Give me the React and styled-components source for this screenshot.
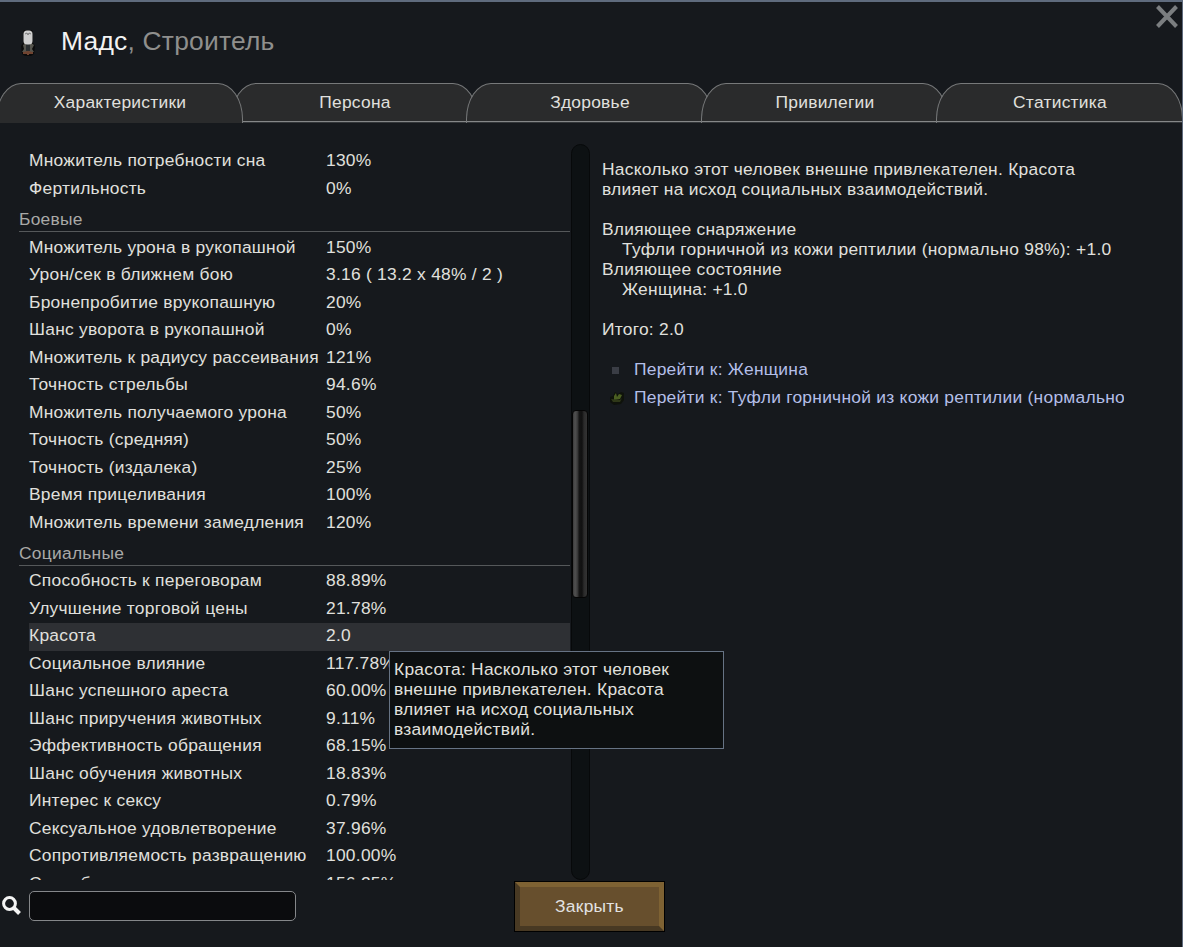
import React from 'react'
import styled, { createGlobalStyle } from 'styled-components'

const GlobalStyle = createGlobalStyle`
  * {
    box-sizing: border-box;
  }

  body {
    margin: 0;
    background: #16191d;
  }
`

const Window = styled.div`
  position: relative;
  display: flex;
  flex-direction: column;
  width: 1183px;
  height: 947px;
  overflow: hidden;
  border-top: 2px solid #5f6b7d;
  border-right: 1px solid #5f6b7d;
  background: #16191d;
  color: #e0e0de;
  font-family: 'Liberation Sans', Arial, sans-serif;
  font-size: 17.4px;
  line-height: 20px;
  letter-spacing: 0.26px;
`

const Header = styled.div`
  display: flex;
  align-items: flex-start;
  height: 81px;
  padding-left: 20px;
`

const Portrait = styled.svg`
  width: 16px;
  height: 28px;
  margin-top: 27px;
`

const Title = styled.h1`
  flex: 1;
  margin: 22px 0 0 25px;
  font-size: 26.4px;
  font-weight: normal;
  line-height: 34px;
  letter-spacing: 0.22px;
  color: #f2f2f2;

  span {
    color: #8f8f8d;
  }
`

const CloseIcon = styled.svg`
  width: 24px;
  height: 24px;
  margin: 2px 3px 0 0;
`

const Tabs = styled.div`
  display: flex;
  flex: none;
  margin-left: -4px;
`

const Tab = styled.div`
  position: relative;
  z-index: ${props => (props.$active ? 1 : 0)};
  flex: none;
  width: 247px;
  height: 40px;
  margin-right: -12px;
  padding-left: 1px;
  border: 1px solid #77797a;
  border-bottom: 0;
  border-radius: 25px 25px 0 0 / 36px 36px 0 0;
  background: #2a2b2c;
  box-shadow: ${props => (props.$active ? 'none' : 'inset 0 -1px #34373a, inset 0 -2px #858788')};
  line-height: 37px;
  text-align: center;
`

const Main = styled.div`
  display: flex;
  height: 757px;
  padding-top: 21px;
`

const StatList = styled.div`
  width: 570px;
  padding: 4px 0 0 19px;
  overflow: hidden;
`

const Group = styled.div`
  &:first-child {
    padding-bottom: 1px;
  }
`

const Section = styled.div`
  height: 28.25px;
  margin-bottom: 2.5px;
  padding-top: 5.3px;
  border-bottom: 1px solid #55585a;
  color: #a9a9a7;
`

const Row = styled.div`
  display: flex;
  height: 27.5px;
  margin-left: 10px;
  padding-top: 2px;
  background: ${props => (props.$active ? '#2e3034' : 'transparent')};
  white-space: nowrap;
`

const Label = styled.div`
  width: 297px;
`

const Scrollbar = styled.div`
  width: 19px;
  margin-left: 1px;
  padding: 265px 2px 0 0;
  border: 1px solid #07090a;
  border-radius: 10px;
  background: #0d1113;
`

const Thumb = styled.div`
  width: 16px;
  height: 188px;
  border: 1px solid #050505;
  border-radius: 4px;
  background: linear-gradient(90deg, #3a3a3a 0, #505050 2px, #4a4a4a 3px, #333 5px, #151515 6px, #111 9px, #2b2b2b 11px, #333 100%);
`

const Details = styled.div`
  flex: 1;
  padding: 15px 0 0 12px;
`

const Description = styled.div`
  white-space: pre-wrap;
`

const Indent = styled.div`
  padding-left: 20px;
`

const Links = styled.div`
  width: 522px;
  margin-top: 16px;
`

const LinkRow = styled.div`
  display: flex;
  align-items: center;
  height: 28px;
  color: #b4bfe8;
  white-space: nowrap;

  svg {
    flex: none;
    width: 20px;
    height: 20px;
    margin: 1px 7px 0 5px;
  }
`

const LinkText = styled.div`
  overflow: hidden;
`

const Footer = styled.div`
  display: flex;
  align-items: flex-start;
  padding-top: 1px;
`

const SearchIcon = styled.svg`
  width: 20px;
  height: 20px;
  margin: 15px 7px 0 2px;
`

const SearchInput = styled.input`
  width: 267px;
  height: 30px;
  margin: 10px 0 0;
  border: 1px solid #85878a;
  border-radius: 5px;
  background: #0b0c0e;
  color: #e2e2e2;
  outline: none;
`

const CloseButton = styled.button`
  width: 151px;
  height: 51px;
  margin-left: 218px;
  padding: 0;
  border: 1px solid #000;
  background: #000;
  color: #e2e2e2;
  font: inherit;
  letter-spacing: inherit;

  span {
    display: block;
    height: 49px;
    border: 5px solid;
    border-color: #7e6233 #7e6233 #483923 #483923;
    background: #674f2d;
    line-height: 39px;
  }
`

const Tooltip = styled.div`
  position: absolute;
  left: 389px;
  top: 649px;
  z-index: 2;
  width: 335px;
  height: 98px;
  padding: 7px 4px;
  border: 1px solid #667384;
  background: #0d1011;
`

const tabs = ['Характеристики', 'Персона', 'Здоровье', 'Привилегии', 'Статистика']

const groups = [
  {
    stats: [
      ['Множитель потребности сна', '130%'],
      ['Фертильность', '0%'],
    ],
  },
  {
    title: 'Боевые',
    stats: [
      ['Множитель урона в рукопашной', '150%'],
      ['Урон/сек в ближнем бою', '3.16 ( 13.2 x 48% / 2 )'],
      ['Бронепробитие врукопашную', '20%'],
      ['Шанс уворота в рукопашной', '0%'],
      ['Множитель к радиусу рассеивания', '121%'],
      ['Точность стрельбы', '94.6%'],
      ['Множитель получаемого урона', '50%'],
      ['Точность (средняя)', '50%'],
      ['Точность (издалека)', '25%'],
      ['Время прицеливания', '100%'],
      ['Множитель времени замедления', '120%'],
    ],
  },
  {
    title: 'Социальные',
    stats: [
      ['Способность к переговорам', '88.89%'],
      ['Улучшение торговой цены', '21.78%'],
      ['Красота', '2.0'],
      ['Социальное влияние', '117.78%'],
      ['Шанс успешного ареста', '60.00%'],
      ['Шанс приручения животных', '9.11%'],
      ['Эффективность обращения', '68.15%'],
      ['Шанс обучения животных', '18.83%'],
      ['Интерес к сексу', '0.79%'],
      ['Сексуальное удовлетворение', '37.96%'],
      ['Сопротивляемость развращению', '100.00%'],
      ['Способность', '156.25%'],
    ],
  },
]

const App = () => {
  return (
    <Window>
      <GlobalStyle />
      <Header>
        <Portrait viewBox="0 0 16 28">
          <path d="M4 1h8l1 3v10l2 3-1 8-3 2H5l-3-2-1-8 2-3V4z" fill="#0b0b0b" />
          <path d="M3 16l3-2h5l3 2-2 4 2 3H2l2-3z" fill="#55544d" />
          <path d="M6 15h4v7H6z" fill="#2b2f31" />
          <rect x="3.5" y="1.5" width="9" height="14" rx="3.5" fill="#cfcfcf" />
          <path d="M5 5l2-1 1 2 1-2 2 1" fill="none" stroke="#7b7b7b" />
          <path d="M3 23l5-1 5 1v2H9v1H7v-1H3z" fill="#6f4330" />
        </Portrait>
        <Title>Мадс<span>, Строитель</span></Title>
        <CloseIcon viewBox="0 0 24 24">
          <path d="M2.5 2.5l19 20M21.5 2.5l-19 20" stroke="#7b7e80" strokeWidth="4" />
        </CloseIcon>
      </Header>
      <Tabs>
        {tabs.map((name, i) => (
          <Tab key={name} $active={i === 0}>{name}</Tab>
        ))}
      </Tabs>
      <Main>
        <StatList>
          {groups.map((group, i) => (
            <Group key={i}>
              {group.title && <Section>{group.title}</Section>}
              {group.stats.map(([label, value]) => (
                <Row key={label} $active={label === 'Красота'}>
                  <Label>{label}</Label>
                  <div>{value}</div>
                </Row>
              ))}
            </Group>
          ))}
        </StatList>
        <Scrollbar>
          <Thumb />
        </Scrollbar>
        <Details>
          <Description>
            Насколько этот человек внешне привлекателен. Красота<br />
            влияет на исход социальных взаимодействий.<br />
            <br />
            Влияющее снаряжение
            <Indent>Туфли горничной из кожи рептилии (нормально 98%): +1.0</Indent>
            Влияющее состояние
            <Indent>Женщина: +1.0</Indent>
            <br />
            Итого: 2.0
          </Description>
          <Links>
            <LinkRow>
              <svg viewBox="0 0 20 20">
                <path d="M5 7h7v7H5z" fill="#3a3d45" />
              </svg>
              <LinkText>Перейти к: Женщина</LinkText>
            </LinkRow>
            <LinkRow>
              <svg viewBox="0 0 20 20">
                <path d="M3 9l3-1 2-4 3 2 3-2 3 1v7l-3 4-7 1-4-3z" fill="#0f120b" />
                <path d="M7 8l2-3 1 4 2-3 3 1-2 4-6 1z" fill="#4b5f22" />
                <path d="M4 11l9 1 2-2-2 4H6z" fill="#2f3818" />
              </svg>
              <LinkText>Перейти к: Туфли горничной из кожи рептилии (нормально 98%)</LinkText>
            </LinkRow>
          </Links>
        </Details>
      </Main>
      <Footer>
        <SearchIcon viewBox="0 0 20 20">
          <circle cx="7.5" cy="7.5" r="5.9" fill="none" stroke="#f4f4f4" strokeWidth="3" />
          <path d="M11.5 11.5l6 6" stroke="#f4f4f4" strokeWidth="4" />
        </SearchIcon>
        <SearchInput />
        <CloseButton><span>Закрыть</span></CloseButton>
      </Footer>
      <Tooltip>
        Красота: Насколько этот человек внешне привлекателен. Красота влияет на исход социальных взаимодействий.
      </Tooltip>
    </Window>
  )
}

export default App
